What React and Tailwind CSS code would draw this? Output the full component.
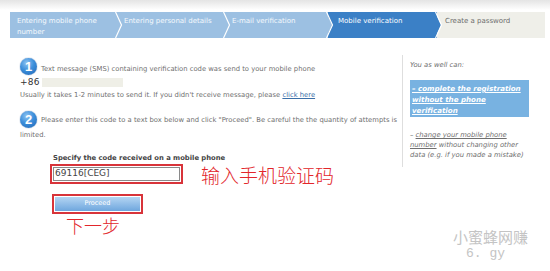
import React from "react";

const steps = [
  { label: ["Entering mobile phone", "number"], w: "w-[107px]", pl: "pl-[7px]", bg: "bg-[#9cc0e2]", fill: "#9cc0e2", text: "text-white/90", z: "z-50" },
  { label: ["Entering personal details"], w: "w-[108px]", pl: "pl-[7px]", bg: "bg-[#9cc0e2]", fill: "#9cc0e2", text: "text-white/90", z: "z-40" },
  { label: ["E-mail verification"], w: "w-[103px]", pl: "pl-[7px]", bg: "bg-[#9cc0e2]", fill: "#9cc0e2", text: "text-white/90", z: "z-30" },
  { label: ["Mobile verification"], w: "w-[109px]", pl: "pl-[10px]", bg: "bg-[#3b80c6]", fill: "#3b80c6", text: "text-white", z: "z-20" },
  { label: ["Create a password"], w: "w-[108px]", pl: "pl-[8px]", bg: "bg-[#efefe9]", fill: null, text: "text-[#6d6d6d]", z: "z-10" },
];

function Circle({ n }) {
  return (
    <div className="relative w-[17px] h-[17px] rounded-full bg-[radial-gradient(circle_at_40%_30%,#8fc4f2_0%,#3d8fdb_45%,#1d64b4_100%)] flex items-center justify-center shrink-0 shadow-[0_0_1px_#1a4f8f]">
      <span className="text-white font-bold text-[13px] leading-none" style={{ fontFamily: "'Liberation Sans', Arial, sans-serif" }}>{n}</span>
    </div>
  );
}

export default function App() {
  return (
    <div className="w-[550px] h-[271px] bg-white relative overflow-hidden text-[6.8px] text-[#6f6f6f]" style={{ fontFamily: "'DejaVu Sans', Verdana, sans-serif" }}>
      <div className="h-[10px] bg-linear-to-b from-[#e4e4e4] to-white" />
      <div className="flex ml-[10px] mt-[2px] h-[26px] text-[7px]">
        {steps.map((s, i) => (
          <div key={i} className={`relative ${s.w} ${s.bg} ${s.pl} pt-[4px] ${s.text} ${s.z} leading-[11px]`}>
            {s.label.map((l, j) => (
              <div key={j}>{l}</div>
            ))}
            {s.fill && (
              <svg className="absolute top-0 right-[-6px]" width="8" height="26" viewBox="0 0 8 26">
                <polygon points="0,0 6,13 0,26" fill={s.fill} />
                <polyline points="0.5,0 6.5,13 0.5,26" fill="none" stroke="white" strokeWidth="1.2" />
              </svg>
            )}
          </div>
        ))}
      </div>

      <div className="flex mt-[17px]">
        <div className="w-[396px] pl-[20px] pt-[3px]">
          <div className="flex items-end gap-[4px]">
            <Circle n="1" />
            <span className="leading-[10px] mb-[1px]">Text message (SMS) containing verification code was send to your mobile phone</span>
          </div>
          <div className="flex items-center mt-[3px] h-[9px]">
            <span className="text-[9px] text-[#333] leading-none tracking-[0.3px]">+86</span>
            <div className="ml-[2px] w-[81px] h-[9px] bg-[#efefe7]" />
          </div>
          <div className="mt-[3px] leading-[10px]">
            Usually it takes 1-2 minutes to send it. If you didn't receive message, please{" "}
            <span className="underline text-[#3b6fa8]">click here</span>
          </div>
          <div className="flex items-center gap-[4px] mt-[11px]">
            <Circle n="2" />
            <span className="leading-[10px] whitespace-nowrap">Please enter this code to a text box below and click "Proceed". Be careful the the quantity of attempts is</span>
          </div>
          <div className="leading-[10px] mt-[2px]">limited.</div>

          <div className="ml-[33px] mt-[14px] font-bold text-[#444] leading-[9px]">Specify the code received on a mobile phone</div>
          <div className="flex items-center mt-[1px]">
            <div className="ml-[30px] w-[133px] h-[20px] border-2 border-[#d8343a] p-[1px]">
              <div className="h-full border border-[#8a8a8a] flex items-center pl-[1px] text-[9px] text-[#444]">
                69116[CEG]
              </div>
            </div>
            <span className="ml-[18px] text-[19px] leading-none text-[#e2262b]" style={{ fontFamily: "'Noto Sans CJK SC', sans-serif", fontWeight: 300 }}>输入手机验证码</span>
          </div>
          <div className="ml-[32px] mt-[10px] w-[91px] h-[20px] border-2 border-[#d8343a] p-[1px]">
            <div className="h-full bg-linear-to-b from-[#b4d5f3] to-[#6ea6dd] flex items-center justify-center text-white text-[6.5px]">
              Proceed
            </div>
          </div>
          <div className="ml-[46px] mt-[2px] text-[18px] leading-none text-[#e2262b]" style={{ fontFamily: "'Noto Sans CJK SC', sans-serif", fontWeight: 300 }}>下一步</div>
        </div>

        <div className="ml-[6px] w-[140px] h-[112px] border-l border-[#dedede] pl-[7px] pt-[5px] italic">
          <div className="leading-[10px]">You as well can:</div>
          <div className="mt-[10px] w-[119px] h-[37px] bg-[#78b2e1] px-[2px] pt-[3px] text-white font-bold underline leading-[11px] text-[7.1px]">
            – complete the registration<br />without the phone<br />verification
          </div>
          <div className="mt-[13px] leading-[10px] w-[125px]">
            – <span className="underline">change your mobile phone number</span> without changing other data (e.g. if you made a mistake)
          </div>
        </div>
      </div>

      <div className="absolute right-[22px] bottom-[11px] flex flex-col items-center text-[#c4c4c4]" style={{ fontFamily: "'Noto Sans CJK SC', sans-serif" }}>
        <div className="text-[15px] leading-[17px]">小蜜蜂网赚</div>
        <div className="text-[13px] leading-[13px] mt-[2px] ml-[-10px]" style={{ fontFamily: "'Liberation Mono', monospace" }}>6. gy</div>
      </div>
    </div>
  );
}
